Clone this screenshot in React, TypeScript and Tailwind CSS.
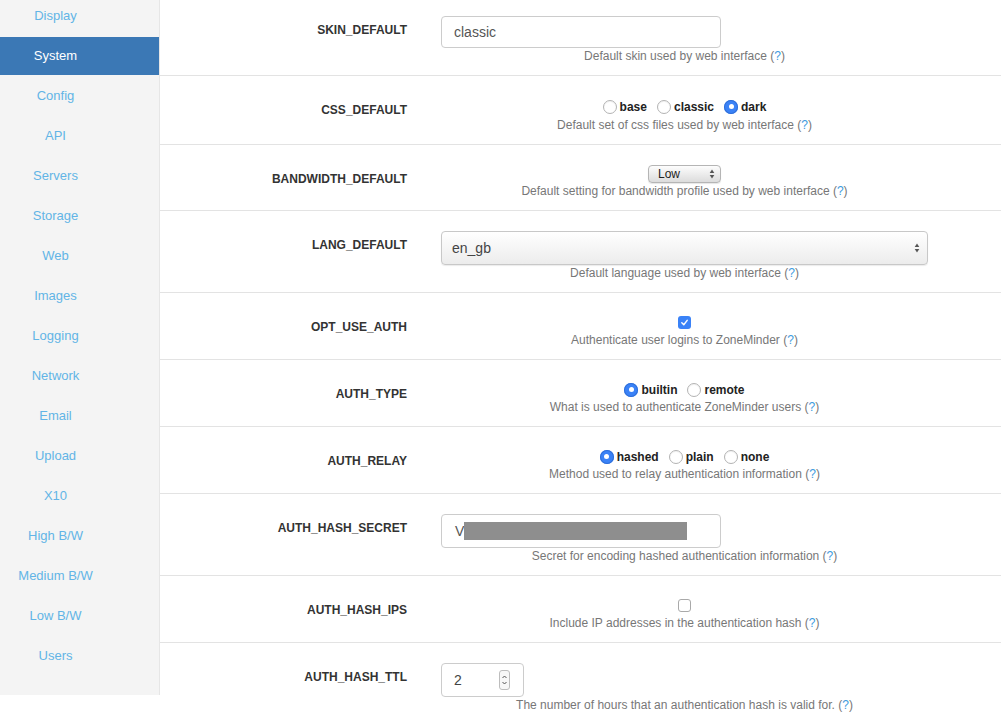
import React from "react";

const navItems = [
  "Display",
  "System",
  "Config",
  "API",
  "Servers",
  "Storage",
  "Web",
  "Images",
  "Logging",
  "Network",
  "Email",
  "Upload",
  "X10",
  "High B/W",
  "Medium B/W",
  "Low B/W",
  "Users",
];

function Radio({ label, checked }: { label: string; checked?: boolean }) {
  return (
    <span className="inline-flex items-center gap-[3px]">
      {checked ? (
        <span className="flex h-[14px] w-[14px] items-center justify-center rounded-full bg-[#3a82f7] shadow-[inset_0_0_0_1px_#2f6fd9]">
          <span className="h-[5px] w-[5px] rounded-full bg-white" />
        </span>
      ) : (
        <span className="h-[14px] w-[14px] rounded-full border border-[#b3b3b3] bg-white shadow-[inset_0_1px_1px_rgba(0,0,0,0.06)]" />
      )}
      <span className="text-[12px] font-bold text-[#222]">{label}</span>
    </span>
  );
}

function Checkbox({ checked }: { checked?: boolean }) {
  if (checked) {
    return (
      <span className="flex h-[13px] w-[13px] items-center justify-center rounded-[3px] bg-[#3a82f7]">
        <svg width="9" height="9" viewBox="0 0 10 10" fill="none">
          <path d="M2 5.3 L4.2 7.5 L8 2.6" stroke="white" strokeWidth="1.6" strokeLinecap="round" strokeLinejoin="round" />
        </svg>
      </span>
    );
  }
  return <span className="h-[13px] w-[13px] rounded-[3px] border border-[#a9a9a9] bg-white" />;
}

function UpDown({ size = 7 }: { size?: number }) {
  return (
    <svg width={size} height={size + 6} viewBox="0 0 7 12">
      <path d="M3.5 0.8 L6.2 4.8 L0.8 4.8 Z" fill="#555" />
      <path d="M3.5 11.2 L6.2 7.2 L0.8 7.2 Z" fill="#555" />
    </svg>
  );
}

function Desc({ text }: { text: string }) {
  return (
    <p className="text-center text-[12px] leading-[17px] text-[#777]">
      {text} (<span className="text-[#3d9be0]">?</span>)
    </p>
  );
}

function Row({
  label,
  desc,
  children,
  left,
}: {
  label: string;
  desc: string;
  children: React.ReactNode;
  left?: boolean;
}) {
  return (
    <div className="flex border-t border-[#e3e3e3]">
      <div className="w-[247px] shrink-0 pt-[26px] text-right text-[12px] font-bold leading-[17px] text-[#333]">
        {label}
      </div>
      <div className="ml-[34px] flex w-[487px] shrink-0 flex-col pt-[20px] pb-[10px]">
        <div className={left ? "flex justify-start" : "flex justify-center"}>{children}</div>
        <Desc text={desc} />
      </div>
    </div>
  );
}

export default function App() {
  return (
    <div className="-mt-[5px] flex bg-white font-['Liberation_Sans',Arial,sans-serif]">
      <nav className="w-[160px] shrink-0 self-start border-r border-[#e6e6e6] bg-[#f4f4f4] pb-[20px]">
        {navItems.map((item) => (
          <div
            key={item}
            className={
              item === "System"
                ? "mt-[2px] flex h-[38px] items-center justify-center bg-[#3b78b5] pr-[48px] text-[13px] text-white"
                : "mt-[2px] flex h-[38px] items-center justify-center pr-[48px] text-[13px] text-[#62b4e6]"
            }
          >
            {item}
          </div>
        ))}
      </nav>

      <main className="flex-1">
        <Row label="SKIN_DEFAULT" desc="Default skin used by web interface" left>
          <div className="flex h-[32px] w-[280px] items-center rounded-[4px] border border-[#cccccc] px-[12px] text-[14px] text-[#555]">
            classic
          </div>
        </Row>

        <Row label="CSS_DEFAULT" desc="Default set of css files used by web interface">
          <div className="flex h-[21px] items-center gap-[10px]">
            <Radio label="base" />
            <Radio label="classic" />
            <Radio label="dark" checked />
          </div>
        </Row>

        <Row label="BANDWIDTH_DEFAULT" desc="Default setting for bandwidth profile used by web interface">
          <div className="flex h-[18px] w-[73px] items-center justify-between rounded-[4px] border border-[#b5b5b5] bg-gradient-to-b from-[#fdfdfd] to-[#dcdcdc] pl-[9px] pr-[5px] text-[12px] text-[#222] shadow-[0_1px_1px_rgba(0,0,0,0.1)]">
            <span>Low</span>
            <UpDown size={6} />
          </div>
        </Row>

        <Row label="LANG_DEFAULT" desc="Default language used by web interface" left>
          <div className="flex h-[34px] w-[487px] items-center justify-between rounded-[4px] border border-[#c8c8c8] bg-gradient-to-b from-[#ffffff] to-[#ececec] pl-[10px] pr-[7px] text-[14px] text-[#444] shadow-[0_1px_1px_rgba(0,0,0,0.08)]">
            <span>en_gb</span>
            <UpDown size={6} />
          </div>
        </Row>

        <Row label="OPT_USE_AUTH" desc="Authenticate user logins to ZoneMinder">
          <div className="flex h-[19px] items-center">
            <Checkbox checked />
          </div>
        </Row>

        <Row label="AUTH_TYPE" desc="What is used to authenticate ZoneMinder users">
          <div className="flex h-[19px] items-center gap-[10px]">
            <Radio label="builtin" checked />
            <Radio label="remote" />
          </div>
        </Row>

        <Row label="AUTH_RELAY" desc="Method used to relay authentication information">
          <div className="flex h-[19px] items-center gap-[10px]">
            <Radio label="hashed" checked />
            <Radio label="plain" />
            <Radio label="none" />
          </div>
        </Row>

        <Row label="AUTH_HASH_SECRET" desc="Secret for encoding hashed authentication information" left>
          <div className="flex h-[34px] w-[280px] items-center rounded-[4px] border border-[#cccccc] pl-[13px] text-[14px] text-[#555]">
            <span>V</span>
            <span className="h-[18px] w-[223px] bg-[#8e8e8e]" />
          </div>
        </Row>

        <Row label="AUTH_HASH_IPS" desc="Include IP addresses in the authentication hash">
          <div className="flex h-[19px] items-center">
            <Checkbox />
          </div>
        </Row>

        <Row label="AUTH_HASH_TTL" desc="The number of hours that an authentication hash is valid for." left>
          <div className="flex h-[34px] w-[83px] items-center justify-between rounded-[4px] border border-[#cccccc] pl-[12px] pr-[13px] text-[14px] text-[#444]">
            <span>2</span>
            <span className="flex h-[20px] w-[11px] flex-col items-center justify-center rounded-[3px] border border-[#bdbdbd] bg-[#f7f7f7]">
              <svg width="7" height="14" viewBox="0 0 7 14" fill="none">
                <path d="M1.5 5 L3.5 3 L5.5 5" stroke="#555" strokeWidth="1" />
                <path d="M1.5 9 L3.5 11 L5.5 9" stroke="#555" strokeWidth="1" />
              </svg>
            </span>
          </div>
        </Row>
      </main>
    </div>
  );
}
